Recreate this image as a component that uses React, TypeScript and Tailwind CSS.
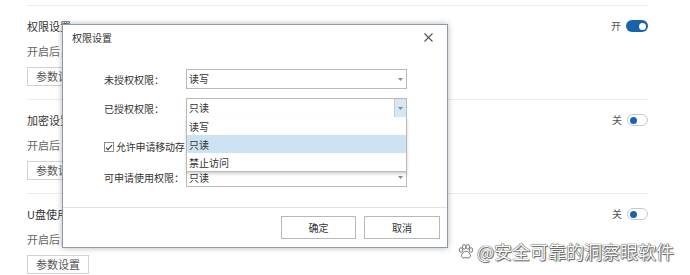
import React from 'react'

const sections = [
    { title: '权限设置', on: true },
    { title: '加密设置', on: false },
    { title: 'U盘使用', on: false },
]

const Toggle = ({ on }: { on: boolean }) => (
    <div className="flex items-center gap-[5px]">
        <span className="text-[10px] leading-none text-[#555]">{on ? '开' : '关'}</span>
        {on ? (
            <div className="flex h-[12px] w-[22px] items-center justify-end rounded-full bg-[#1a62ad] pr-[2px]">
                <div className="h-[7px] w-[7px] rounded-full bg-white" />
            </div>
        ) : (
            <div className="flex h-[12px] w-[21px] items-center rounded-full border border-[#c8c8c8] bg-white pl-[2px]">
                <div className="h-[7px] w-[7px] rounded-full bg-[#1a62ad]" />
            </div>
        )}
    </div>
)

const Arrow = () => (
    <svg width="5" height="3" viewBox="0 0 5 3" aria-hidden="true">
        <path d="M0 0h5L2.5 3z" fill="#8a8a8a" />
    </svg>
)

const Select = ({ value, open }: { value: string; open?: boolean }) => (
    <div className="relative flex h-full w-[221px] items-center border border-[#b9b9b9] bg-white">
        <span className="flex-1 pl-[2px] text-[10px] leading-none text-[#333]">{value}</span>
        {open ? (
            <div className="flex h-full w-[12px] items-center justify-center border-l border-[#b9d3e8] bg-[#d6e7f4]">
                <Arrow />
            </div>
        ) : (
            <div className="flex h-full w-[12px] items-center justify-center">
                <Arrow />
            </div>
        )}
        {open && (
            <div className="absolute left-[-1px] top-full z-10 w-[221px] border border-t-0 border-[#b9b9b9] bg-white shadow-[0_2px_3px_rgba(0,0,0,0.18)]">
                {['读写', '只读', '禁止访问'].map((item) => (
                    <div
                        key={item}
                        className={
                            item === '只读'
                                ? 'flex h-[18px] items-center bg-[#cce3f3] pl-[2px] text-[10px] text-[#333]'
                                : 'flex h-[18px] items-center pl-[2px] text-[10px] text-[#333]'
                        }
                    >
                        {item}
                    </div>
                ))}
            </div>
        )}
    </div>
)

const Paw = () => (
    <svg width="16" height="15" viewBox="0 0 16 15" aria-hidden="true">
        <g fill="#fafafa" stroke="#7a7a7a" strokeWidth="1">
            <ellipse cx="3" cy="6" rx="1.8" ry="2.3" />
            <ellipse cx="6.2" cy="2.8" rx="1.8" ry="2.3" />
            <ellipse cx="9.8" cy="2.8" rx="1.8" ry="2.3" />
            <ellipse cx="13" cy="6" rx="1.8" ry="2.3" />
            <path d="M8 7.2c-2.4 0-4.6 2.6-4.6 4.6 0 1.6 1.4 2.2 2.6 2.2 .8 0 1.3-.4 2-.4s1.2.4 2 .4c1.2 0 2.6-.6 2.6-2.2 0-2-2.2-4.6-4.6-4.6z" />
        </g>
    </svg>
)

const App = () => {
    return (
        <div className="relative h-[275px] w-[690px] overflow-hidden bg-white font-['Noto_Sans_CJK_SC','Microsoft_YaHei',sans-serif]">
            <div className="pl-[27px] pr-[42px] pt-[5px]">
                {sections.map(({ title, on }) => (
                    <section key={title} className="border-t border-[#ececec] pb-[13px] pt-3">
                        <div className="flex h-4 items-center justify-between">
                            <span className="text-[11px] leading-4 text-[#333]">{title}</span>
                            <Toggle on={on} />
                        </div>
                        <p className="mt-[9px] h-4 text-[11px] leading-4 text-[#666]">开启后，终端将按照设置的权限访问</p>
                        <button className="mt-2 block h-[19px] border border-[#d2d2d2] bg-white px-[8px] text-[11px] leading-none text-[#555]">
                            参数设置
                        </button>
                    </section>
                ))}
            </div>

            <div className="absolute left-[62px] top-[24px] flex h-[224px] w-[386px] flex-col border border-[#8e9ba6] bg-white shadow-[0_0_6px_rgba(40,50,60,0.35)]">
                <div className="flex h-[24px] items-center justify-between pl-[9px] pr-[14px]">
                    <span className="text-[10px] text-[#333]">权限设置</span>
                    <svg width="9" height="9" viewBox="0 0 9 9" aria-hidden="true">
                        <path d="M0.5 0.5l8 8M8.5 0.5l-8 8" stroke="#555" strokeWidth="1.1" />
                    </svg>
                </div>

                <div className="flex-1 pl-[41px] pt-5">
                    <div className="flex h-5 items-center">
                        <span className="w-[82px] text-[10px] text-[#333]">未授权权限：</span>
                        <Select value="读写" />
                    </div>
                    <div className="relative z-10 mt-[9px] flex h-5 items-center">
                        <span className="w-[82px] text-[10px] text-[#333]">已授权权限：</span>
                        <Select value="只读" open />
                    </div>
                    <div className="mt-[22px] flex h-[14px] items-center gap-[2px]">
                        <div className="flex h-[10px] w-[10px] items-center justify-center border border-[#8d8d8d] bg-white">
                            <svg width="8" height="7" viewBox="0 0 8 7" aria-hidden="true">
                                <path d="M1 3.6l2 2L7 1" fill="none" stroke="#333" strokeWidth="1.1" />
                            </svg>
                        </div>
                        <span className="whitespace-nowrap text-[10px] leading-[12px] tracking-[-0.2px] text-[#333]">允许申请移动存</span>
                    </div>
                    <div className="mt-[14px] flex h-[19px] items-center">
                        <span className="w-[82px] text-[10px] text-[#333]">可申请使用权限：</span>
                        <Select value="只读" />
                    </div>
                </div>

                <div className="flex h-[40px] items-start justify-end gap-2 border-t border-[#e2e2e2] pr-[7px] pt-2">
                    <button className="h-[23px] w-[75px] border border-[#b8b8b8] bg-white text-[10px] text-[#333]">确定</button>
                    <button className="h-[23px] w-[76px] border border-[#b8b8b8] bg-white text-[10px] text-[#333]">取消</button>
                </div>
            </div>

            <div className="absolute left-[458px] top-[240px] flex items-center gap-[3px]">
                <Paw />
                <span className="text-[18px] leading-[22px] text-[#fafafa] [text-shadow:0_0_1px_#444,0_0_1px_#444,1px_1px_1px_#666]">
                    @安全可靠的洞察眼软件
                </span>
            </div>
        </div>
    )
}

export default App
